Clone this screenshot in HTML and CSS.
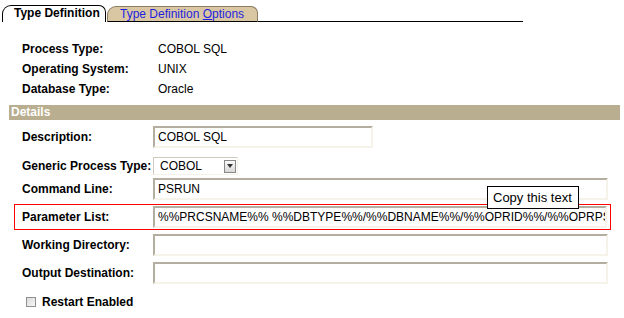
FILE: index.html
```html
<!DOCTYPE html>
<html lang="en">
<head>
  <meta charset="UTF-8">
  <title>Process Type Definition</title>
  <link rel="stylesheet" href="styles.css">
</head>
<body>
  <div class="page">
    <div class="tabbar">
      <div class="tab active">Type Definition</div>
      <div class="tab">Type Definition <u>O</u>ptions</div>
      <div class="tab-fill"></div>
    </div>

    <div class="info">
      <div class="info-row"><span class="label">Process Type:</span><span class="value">COBOL SQL</span></div>
      <div class="info-row"><span class="label">Operating System:</span><span class="value">UNIX</span></div>
      <div class="info-row"><span class="label">Database Type:</span><span class="value">Oracle</span></div>
    </div>

    <div class="section-bar">Details</div>

    <div class="form">
      <div class="row desc">
        <label class="label">Description:</label>
        <input class="field short" type="text" value="COBOL SQL">
      </div>
      <div class="row generic">
        <label class="label">Generic Process Type:</label>
        <div class="select">
          <span class="select-text">COBOL</span>
          <span class="select-btn"><span class="arrow"></span></span>
        </div>
      </div>
      <div class="row cmd">
        <label class="label">Command Line:</label>
        <input class="field" type="text" value="PSRUN">
      </div>
      <div class="row param">
        <label class="label">Parameter List:</label>
        <input class="field" type="text" value="%%PRCSNAME%% %%DBTYPE%%/%%DBNAME%%/%%OPRID%%/%%OPRPSWD%%/%%RUNCNTLID%%">
      </div>
      <div class="row workdir">
        <label class="label">Working Directory:</label>
        <input class="field" type="text" value="">
      </div>
      <div class="row outdest">
        <label class="label">Output Destination:</label>
        <input class="field" type="text" value="">
      </div>
      <div class="check-row">
        <span class="checkbox"></span>
        <span class="label">Restart Enabled</span>
      </div>
    </div>

    <div class="tooltip">Copy this text</div>
  </div>
</body>
</html>
```

FILE: styles.css
```css
* {
  margin: 0;
  padding: 0;
  box-sizing: border-box;
}

body {
  font-family: 'Liberation Sans', Arial, sans-serif;
  font-size: 12px;
  color: #000;
  background: #fff;
}

.page {
  position: relative;
  width: 624px;
  height: 318px;
}

/* tabs */
.tabbar {
  display: flex;
  align-items: flex-end;
  width: 523px;
  height: 22px;
  padding: 4px 0 0 2px;
}

.tab {
  height: 17px;
  line-height: 15px;
  font-size: 12px;
  border: 1px solid #000;
  border-bottom: none;
}

.tab.active {
  width: 104px;
  padding-left: 11px;
  font-weight: bold;
  background: #fff;
  border-radius: 9px 7px 0 0;
}

.tab:not(.active) {
  width: 151px;
  margin-left: 1px;
  padding-left: 12px;
  color: #1f1fe0;
  background: #d9c7a3;
  border-color: #8a7c5e;
  border-bottom: 1px solid #000;
  border-radius: 9px 7px 0 0;
  height: 16px;
  line-height: 14px;
}

.tab-fill {
  flex: 1;
  border-bottom: 1px solid #000;
}

/* header info */
.info {
  margin-top: 17px;
  padding-left: 22px;
}

.info-row {
  display: flex;
  align-items: center;
  height: 20px;
}

.info-row .label {
  width: 136px;
}

.label {
  font-weight: bold;
}

.section-bar {
  margin: 6px 4px 0 9px;
  height: 15px;
  line-height: 14px;
  padding-left: 2px;
  background: #b9ae8f;
  color: #fff;
  font-weight: bold;
}

/* form */
.form {
  display: flex;
  flex-direction: column;
}

.row {
  display: flex;
  align-items: center;
  padding-left: 22px;
}

.row .label {
  width: 131px;
}

.field {
  width: 455px;
  height: 22px;
  padding: 0 0 0 3px;
  font-family: inherit;
  font-size: 12px;
  color: #000;
  background: #fff;
  border: 2px solid;
  border-color: #b3ae9f #f6f3ea #f6f3ea #b3ae9f;
  outline: none;
}

.field.short {
  width: 220px;
}

.desc {
  margin-top: 6px;
}

.generic {
  margin-top: 9px;
  height: 18px;
}

.cmd {
  margin-top: 3px;
}

.param {
  margin: 4px 13px 0 14px;
  padding: 1px 3px 1px 7px;
  border: 1px solid #f00;
}

.param .field {
  width: 454px;
}

.workdir {
  margin-top: 4px;
}

.outdest {
  margin-top: 6px;
}

.select {
  display: flex;
  align-items: center;
  justify-content: space-between;
  width: 85px;
  height: 18px;
  padding: 0 1px 0 6px;
  border: 1px solid;
  border-color: #cfcabb #f4f1e6 #f4f1e6 #cfcabb;
}

.select-btn {
  display: flex;
  align-items: center;
  justify-content: center;
  width: 12px;
  height: 13px;
  border: 1px solid #888;
  background: linear-gradient(#fafafa, #d8d8d8);
}

.arrow {
  width: 0;
  height: 0;
  border-left: 3px solid transparent;
  border-right: 3px solid transparent;
  border-top: 4px solid #333;
}

.check-row {
  display: flex;
  align-items: center;
  gap: 6px;
  margin-top: 10px;
  padding-left: 26px;
  height: 16px;
}

.checkbox {
  width: 10px;
  height: 10px;
  border: 1px solid #8f8f8f;
  background: linear-gradient(135deg, #dcdcdc, #f6f6f6);
}

/* tooltip */
.tooltip {
  position: absolute;
  left: 487px;
  top: 186px;
  width: 92px;
  height: 23px;
  line-height: 21px;
  padding-left: 5px;
  font-size: 13px;
  background: #fff;
  border: 1px solid #000;
}
```
